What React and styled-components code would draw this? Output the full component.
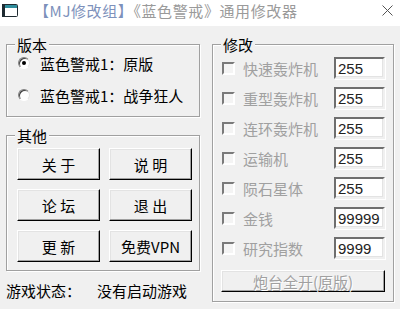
import React from 'react';
import styled, { createGlobalStyle } from 'styled-components';

const Global = createGlobalStyle`
  html, body {
    margin: 0;
    padding: 0;
    background: #f0f0f0;
    overflow: hidden;
  }
  * { box-sizing: border-box; }
`;

const Win = styled.div`
  width: 400px;
  height: 309px;
  background: #f0f0f0;
  font-family: "Noto Sans CJK SC", "Noto Sans", sans-serif;
  font-size: 15px;
  line-height: 15px;
  color: #000;
  display: flex;
  flex-direction: column;
`;

const TitleBar = styled.div`
  height: 26px;
  background: #fff;
  display: flex;
  align-items: center;
  padding: 0 7px 6px 2px;
`;

const Title = styled.div`
  margin-left: 16px;
  flex: 1;
  color: #9a9a9a;
  font-size: 15px;
  letter-spacing: 0.6px;
  white-space: nowrap;
`;

const Tag = styled.span`
  color: #7d91bb;
`;

const Body = styled.div`
  display: flex;
  gap: 12px;
  padding: 11px 6px 0 6px;
`;

const Column = styled.div`
  width: 194px;
  display: flex;
  flex-direction: column;
`;

const Group = styled.fieldset`
  margin: ${p => p.$top || 0}px 0 0 0;
  padding: 0 8px;
  height: ${p => p.$h}px;
  width: ${p => p.$w || 194}px;
  min-width: 0;
  border: 1px solid #a0a0a0;
  box-shadow: 1px 1px 0 #fff, inset 1px 1px 0 #fff;
`;

const Legend = styled.legend`
  padding: 0 2px;
  margin-left: 0;
  background: #f0f0f0;
  line-height: 15px;
`;

const RadioList = styled.div`
  display: flex;
  flex-direction: column;
  gap: 10px;
  padding-left: 3px;
`;

const RadioRow = styled.div`
  height: 22px;
  display: flex;
  align-items: center;
  gap: 10px;
`;

const Radio = styled.span`
  width: 12px;
  height: 12px;
  border-radius: 50%;
  border: 1px solid;
  border-color: #808080 #e3e3e3 #fff #808080;
  box-shadow: inset 1px 1px 0 #404040;
  background: #fff;
  display: flex;
  align-items: center;
  justify-content: center;
  &::after {
    content: "";
    width: 4px;
    height: 4px;
    border-radius: 50%;
    background: ${p => (p.$on ? '#000' : 'transparent')};
  }
`;

const ButtonGrid = styled.div`
  display: grid;
  grid-template-columns: 83px 83px;
  grid-auto-rows: 32px;
  gap: 9px;
  margin: 5px 0 0 2px;
`;

const Button = styled.button`
  font: inherit;
  font-size: 15px;
  line-height: 15px;
  white-space: pre;
  margin: 0;
  padding: 0;
  background: #f0f0f0;
  color: ${p => (p.disabled ? '#a0a0a0' : '#000')};
  text-shadow: ${p => (p.disabled ? '1px 1px 0 #fff' : 'none')};
  border: 1px solid;
  border-color: #fff #000 #000 #fff;
  box-shadow: inset -1px -1px 0 #a0a0a0, inset 1px 1px 0 #e3e3e3;
  height: ${p => p.$h || 32}px;
  width: ${p => (p.$wide ? '164px' : 'auto')};
  margin-top: ${p => p.$top || 0}px;
`;

const Status = styled.div`
  display: flex;
  margin-top: 11px;
  height: 16px;
  align-items: center;
`;

const StatusLabel = styled.span`
  width: 91px;
`;

const RowList = styled.div`
  display: flex;
  flex-direction: column;
  gap: 8px;
  margin-top: 5px;
  padding-left: 1px;
`;

const CheckRow = styled.div`
  height: 22px;
  display: flex;
  align-items: center;
`;

const Check = styled.span`
  width: 13px;
  height: 13px;
  border: 2px solid;
  border-color: #7a7a7a #fff #fff #7a7a7a;
  background: #f4f4f4;
  flex: none;
`;

const CheckLabel = styled.span`
  margin-left: 8px;
  color: #a0a0a0;
  flex: 1;
`;

const Field = styled.input`
  width: 51px;
  height: 22px;
  margin: 0;
  padding: 1px 0 0 2px;
  font-family: "Liberation Sans", sans-serif;
  font-size: 15px;
  color: #222;
  background: #fff;
  border: 2px solid;
  border-color: #6e6e6e #f0f0f0 #f0f0f0 #6e6e6e;
  box-shadow: inset -1px -1px 0 #e3e3e3, 1px 1px 0 #fff;
  outline: none;
`;

const WinIcon = () => (
  <svg width="16" height="13" viewBox="0 0 16 13">
    <rect x="0.5" y="0.5" width="15" height="12" rx="1" fill="#fff" stroke="#1e2a30" />
    <rect x="1" y="1" width="14" height="3" fill="#2f8d9c" />
    <rect x="0" y="0" width="3" height="13" fill="#1e2a30" />
  </svg>
);

const CloseIcon = () => (
  <svg width="11" height="11" viewBox="0 0 11 11">
    <path d="M0.5 0.5 L10.5 10.5 M10.5 0.5 L0.5 10.5" stroke="#555" strokeWidth="1" />
  </svg>
);

const mods = [
  ['快速轰炸机', '255'],
  ['重型轰炸机', '255'],
  ['连环轰炸机', '255'],
  ['运输机', '255'],
  ['陨石星体', '255'],
  ['金钱', '99999'],
  ['研究指数', '9999'],
];

const buttons = ['关 于', '说 明', '论 坛', '退 出', '更 新', '免费VPN'];

export default function App() {
  return (
    <Win>
      <Global />
      <TitleBar>
        <WinIcon />
        <Title>
          <Tag>【MJ修改组】</Tag>《蓝色警戒》通用修改器
        </Title>
        <CloseIcon />
      </TitleBar>
      <Body>
        <Column>
          <Group $h={80}>
            <Legend>版本</Legend>
            <RadioList>
              <RadioRow>
                <Radio $on />
                <span>蓝色警戒1：原版</span>
              </RadioRow>
              <RadioRow>
                <Radio />
                <span>蓝色警戒1：战争狂人</span>
              </RadioRow>
            </RadioList>
          </Group>
          <Group $h={143} $top={11}>
            <Legend>其他</Legend>
            <ButtonGrid>
              {buttons.map(b => (
                <Button key={b}>{b}</Button>
              ))}
            </ButtonGrid>
          </Group>
          <Status>
            <StatusLabel>游戏状态：</StatusLabel>
            <span>没有启动游戏</span>
          </Status>
        </Column>
        <Group $h={265} $w={182}>
          <Legend>修改</Legend>
          <RowList>
            {mods.map(([name, val]) => (
              <CheckRow key={name}>
                <Check />
                <CheckLabel>{name}</CheckLabel>
                <Field readOnly value={val} />
              </CheckRow>
            ))}
          </RowList>
          <Button disabled $wide $h={22} $top={11}>炮台全开(原版)</Button>
        </Group>
      </Body>
    </Win>
  );
}
